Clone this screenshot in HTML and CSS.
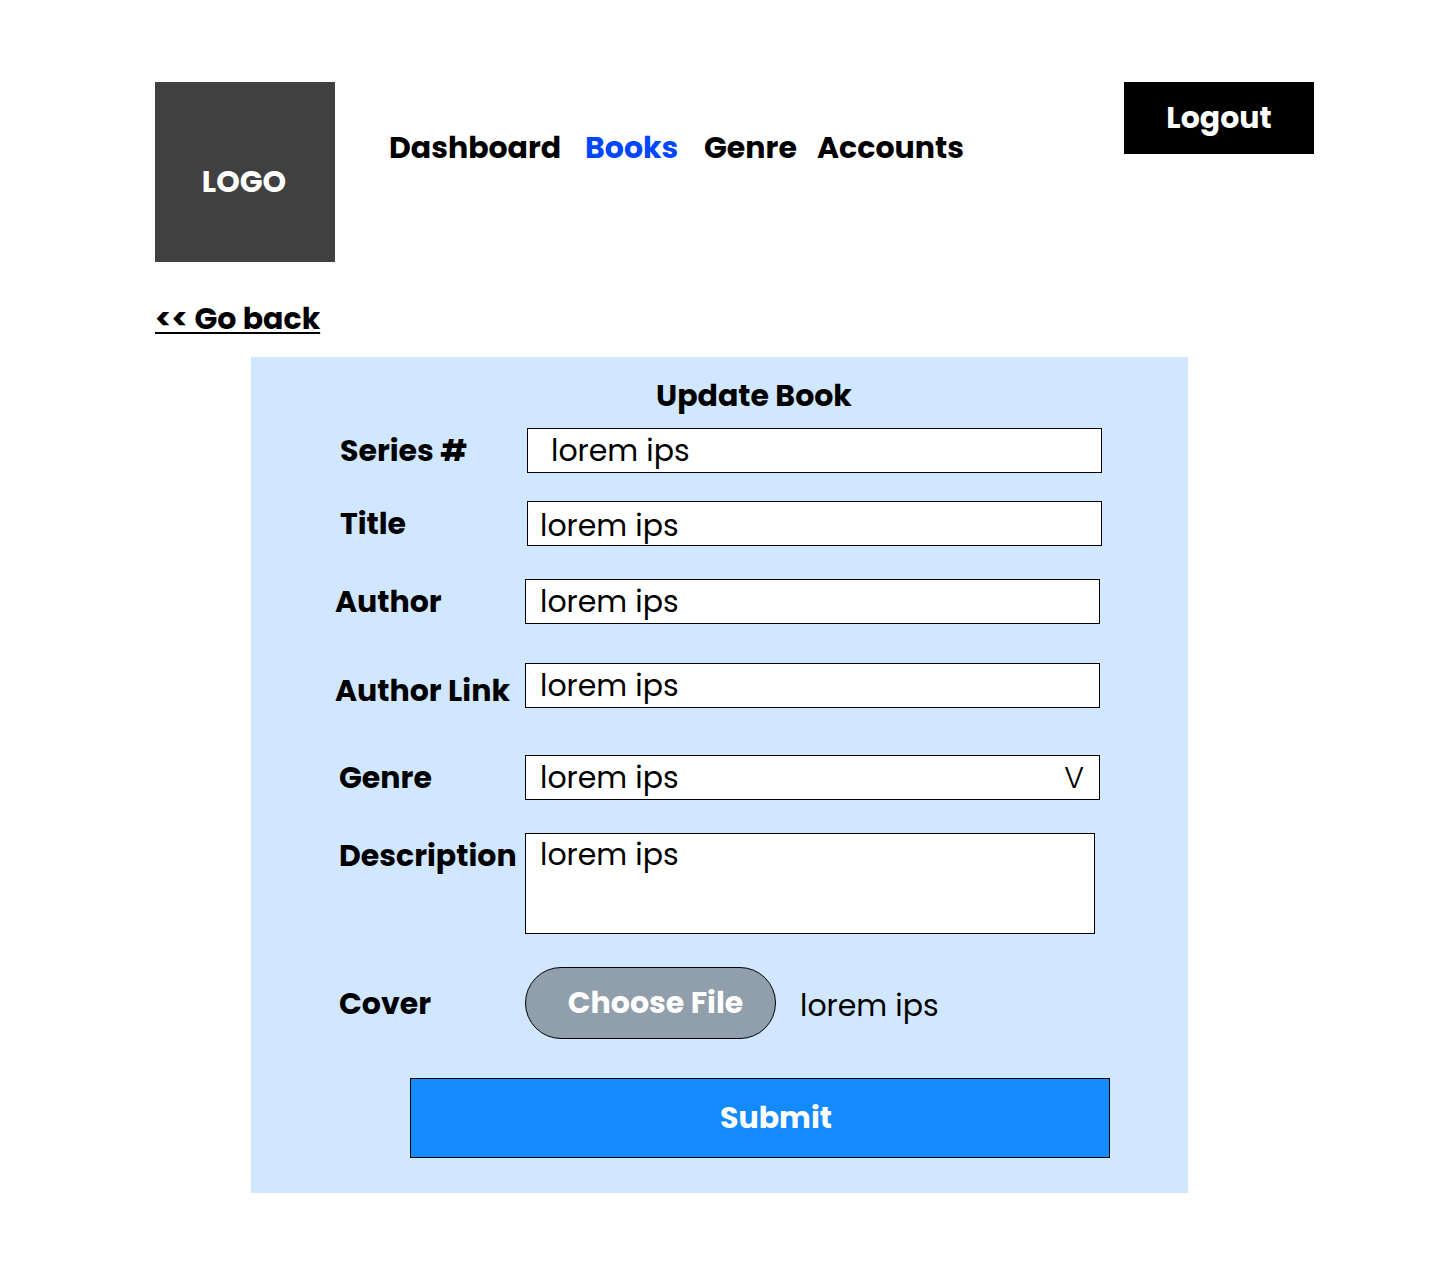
FILE: index.html
```html
<!DOCTYPE html>
<html lang="en">
<head>
  <meta charset="utf-8">
  <meta name="viewport" content="width=device-width, initial-scale=1">
  <title>Update Book</title>
  <link rel="stylesheet" href="styles.css">
</head>
<body>
  <header class="header">
    <div class="logo">LOGO</div>
    <nav class="nav">
      <a class="nav-link" href="#dashboard">Dashboard</a>
      <a class="nav-link nav-link--active" href="#books" aria-current="page">Books</a>
      <a class="nav-link" href="#genre">Genre</a>
      <a class="nav-link" href="#accounts">Accounts</a>
    </nav>
    <button class="logout" type="button">Logout</button>
  </header>

  <main>
    <a class="back" href="#books">&lt;&lt; Go back</a>

    <form class="form">
      <h1 class="form-title">Update Book</h1>

      <div class="row row--shifted">
        <label class="label label--indent" for="series">Series #</label>
        <input class="control control--roomy" id="series" type="text" value="lorem ips">
      </div>
      <div class="row row--shifted space-md">
        <label class="label label--indent" for="title">Title</label>
        <input class="control control--low" id="title" type="text" value="lorem ips">
      </div>
      <div class="row space-lg">
        <label class="label" for="author">Author</label>
        <input class="control" id="author" type="text" value="lorem ips">
      </div>
      <div class="row space-xl">
        <label class="label label--low" for="author-link">Author Link</label>
        <input class="control" id="author-link" type="text" value="lorem ips">
      </div>
      <div class="row space-md">
        <label class="label label--indent" for="genre">Genre</label>
        <div class="select">
          <select class="control" id="genre">
            <option>lorem ips</option>
          </select>
          <span class="select-arrow" aria-hidden="true">V</span>
        </div>
      </div>
      <div class="row space-md">
        <label class="label label--indent" for="description">Description</label>
        <textarea class="control control--area" id="description">lorem ips</textarea>
      </div>
      <div class="row row--file space-lg">
        <label class="label label--indent" for="cover">Cover</label>
        <input class="file-input" id="cover" type="file">
        <label class="file-button" for="cover">Choose File</label>
        <span class="file-name">lorem ips</span>
      </div>

      <button class="submit" type="submit">Submit</button>
    </form>
  </main>
</body>
</html>
```
FILE: styles.css
```css
* {
  box-sizing: border-box;
}

body {
  margin: 0;
  padding: 82px 0 75px;
  background: #fff;
  color: #000;
  font-family: Poppins, Inter, "Open Sans", sans-serif;
  font-size: 30px;
  line-height: 45px;
}

.header {
  display: flex;
  align-items: flex-start;
  padding: 0 126px 0 155px;
}

.logo {
  display: flex;
  align-items: center;
  justify-content: center;
  width: 180px;
  height: 180px;
  padding: 18px 2px 0 0;
  background: #404040;
  color: #fff;
  font-weight: 700;
}

.nav {
  display: grid;
  grid-template-columns: 196px 119px 113px auto;
  margin: 43px auto 0 54px;
}

.nav-link {
  color: #000;
  font-weight: 700;
  text-decoration: none;
}

.nav-link--active {
  color: #0047ff;
}

.logout {
  width: 190px;
  height: 72px;
  padding: 0 0 2px;
  border: 0;
  background: #000;
  color: #fff;
  font: inherit;
  font-weight: 700;
}

.back {
  display: block;
  width: fit-content;
  margin: 34px 0 0 155px;
  color: #000;
  font-weight: 700;
  text-decoration: underline 2px;
  text-decoration-skip-ink: none;
  text-underline-offset: 3px;
}

.form {
  margin: 16px 252px 0 251px;
  padding: 16px 0 35px;
  background: #d0e7ff;
}

.form-title {
  margin: 0 0 10px;
  padding-left: 69px;
  font-size: inherit;
  font-weight: 700;
  text-align: center;
}

.row {
  display: flex;
  align-items: flex-start;
  margin-bottom: 28px;
  padding: 0 88px 0 84px;
}

.row--shifted {
  padding: 0 86px;
}

.row--file {
  align-items: center;
}

.space-md {
  margin-bottom: 33px;
}

.space-lg {
  margin-bottom: 39px;
}

.space-xl {
  margin-bottom: 42px;
}

.label {
  flex: 0 0 190px;
  font-weight: 700;
  white-space: nowrap;
}

.label--indent {
  padding-left: 4px;
}

.row--shifted .label--indent {
  padding-left: 3px;
}

.label--low {
  padding-top: 5px;
}

.control {
  display: block;
  flex: 1;
  width: 100%;
  min-width: 0;
  height: 45px;
  margin: 0;
  padding: 0 14px;
  border: 1px solid #000;
  border-radius: 0;
  background: #fff;
  color: #000;
  font: inherit;
  line-height: 43px;
  appearance: none;
}

.control--roomy {
  padding: 0 23px;
}

.control--low {
  padding: 4px 12px 0;
}

.control--area {
  height: 101px;
  margin-right: 5px;
  line-height: 41px;
  resize: none;
}

.select {
  position: relative;
  flex: 1;
}

.select-arrow {
  position: absolute;
  top: 0;
  right: 16px;
  font-weight: 300;
  pointer-events: none;
}

.file-input {
  position: absolute;
  width: 1px;
  height: 1px;
  opacity: 0;
}

.file-button {
  width: 251px;
  height: 72px;
  padding-left: 10px;
  border: 1px solid #000;
  border-radius: 36px;
  background: #919eab;
  color: #fff;
  font-weight: 700;
  line-height: 70px;
  text-align: center;
}

.file-name {
  padding: 4px 0 0 24px;
}

.submit {
  display: block;
  width: calc(100% - 237px);
  height: 80px;
  margin-left: 159px;
  padding: 0 0 2px 32px;
  border: 1px solid #000;
  background: #148aff;
  color: #fff;
  font: inherit;
  font-weight: 700;
}
```
